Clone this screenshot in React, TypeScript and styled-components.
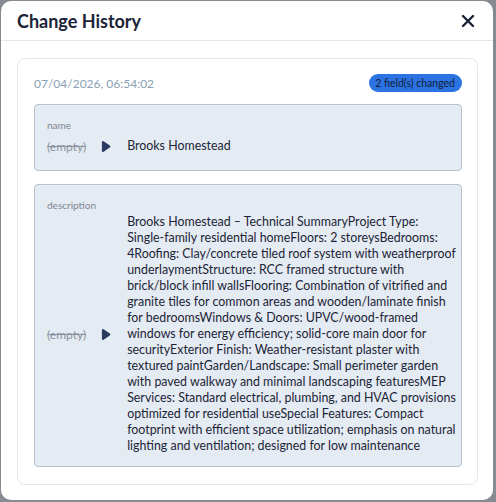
import React from "react";
import styled, { createGlobalStyle } from "styled-components";

const GlobalStyle = createGlobalStyle`
  html, body {
    margin: 0;
    padding: 0;
    background: #868a91;
    font-family: Lato, "Open Sans", sans-serif;
  }
`;

type Change = { field: string; from?: string; to: string };

const entry = {
  timestamp: "07/04/2026, 06:54:02",
  changes: [
    { field: "name", to: "Brooks Homestead" },
    {
      field: "description",
      to:
        "Brooks Homestead – Technical SummaryProject Type: Single-family residential homeFloors: 2 storeysBedrooms: 4Roofing: Clay/concrete tiled roof system with weatherproof underlaymentStructure: RCC framed structure with brick/block infill wallsFlooring: Combination of vitrified and granite tiles for common areas and wooden/laminate finish for bedroomsWindows & Doors: UPVC/wood-framed windows for energy efficiency; solid-core main door for securityExterior Finish: Weather-resistant plaster with textured paintGarden/Landscape: Small perimeter garden with paved walkway and minimal landscaping featuresMEP Services: Standard electrical, plumbing, and HVAC provisions optimized for residential useSpecial Features: Compact footprint with efficient space utilization; emphasis on natural lighting and ventilation; designed for low maintenance",
    },
  ] as Change[],
};

// keep hyphenated words on one line
const renderValue = (text: string) =>
  text.split(/(\S+-\S+)/).map((part, i) =>
    i % 2 === 1 ? <NoWrap key={i}>{part}</NoWrap> : part
  );

const ChangeHistory = () => {
  return (
    <Page>
      <GlobalStyle />
      <Modal>
        {/* Header */}
        <Header>
          <Title>Change History</Title>
          <CloseButton aria-label="Close">
            <svg width="14" height="14" viewBox="0 0 14 14">
              <path d="M2 2L12 12M12 2L2 12" stroke="#1b2437" strokeWidth="2.4" strokeLinecap="round" />
            </svg>
          </CloseButton>
        </Header>

        <Body>
          <Card>
            <CardTop>
              <Timestamp>{entry.timestamp}</Timestamp>
              <Badge>{entry.changes.length} field(s) changed</Badge>
            </CardTop>

            {entry.changes.map(change => (
              <FieldBox key={change.field}>
                <FieldLabel>{change.field}</FieldLabel>
                <DiffRow>
                  <OldValue>{change.from ?? "(empty)"}</OldValue>
                  <Arrow width="10" height="13" viewBox="0 0 10 13">
                    <path
                      d="M2 2.2 L8.2 6.5 L2 10.8 Z"
                      fill="#2b3a5f"
                      stroke="#2b3a5f"
                      strokeWidth="2.2"
                      strokeLinejoin="round"
                    />
                  </Arrow>
                  <NewValue>{renderValue(change.to)}</NewValue>
                </DiffRow>
              </FieldBox>
            ))}
          </Card>
        </Body>
      </Modal>
    </Page>
  );
};

export default ChangeHistory;

const Page = styled.div`
  padding: 1px 3px 2px 1px;
  height: 502px;
  box-sizing: border-box;
`;

const Modal = styled.div`
  background: #fff;
  border-radius: 10px;
  height: 100%;
  display: flex;
  flex-direction: column;
  overflow: hidden;
`;

const Header = styled.div`
  flex-shrink: 0;
  height: 39px;
  display: flex;
  align-items: center;
  justify-content: space-between;
  padding: 0 18px 0 16px;
  border-bottom: 1px solid #e3e6ea;
`;

const Title = styled.h2`
  margin: 0;
  font-size: 18px;
  font-weight: 700;
  color: #1b2437;
`;

const CloseButton = styled.button`
  border: 0;
  background: none;
  padding: 0;
  display: flex;
  cursor: pointer;
`;

const Body = styled.div`
  padding: 17px 15px 0 16px;
`;

const Card = styled.div`
  border: 1px solid #e3e8ee;
  border-radius: 8px;
  padding: 15px 15px 17px 16px;
  display: flex;
  flex-direction: column;
  gap: 12px;
`;

const CardTop = styled.div`
  display: flex;
  align-items: center;
  justify-content: space-between;
  height: 18px;
`;

const Timestamp = styled.span`
  font-size: 12px;
  color: #8ba0b4;
`;

const Badge = styled.span`
  background: #2b72e2;
  color: #14213a;
  font-size: 10.5px;
  line-height: 18px;
  padding: 0 7px 0 6px;
  border-radius: 9px;
`;

const FieldBox = styled.div`
  background: #e5ebf2;
  border: 1px solid #b7c3d1;
  border-radius: 4px;
  padding: 14px 1px 12px 12px;

  & + & {
    margin-top: 1px;
  }
`;

const FieldLabel = styled.div`
  font-size: 10px;
  line-height: 12px;
  color: #7b8592;
  margin-bottom: 3px;
`;

const DiffRow = styled.div`
  display: flex;
  align-items: center;
  gap: 15px;
  min-height: 24px;
`;

const OldValue = styled.span`
  font-size: 12px;
  color: #8a939f;
  text-decoration: line-through;
  flex-shrink: 0;
`;

const Arrow = styled.svg`
  flex-shrink: 0;
  margin-right: 1px;
`;

const NewValue = styled.span`
  font-size: 12.4px;
  line-height: 16px;
  color: #1b2437;
  flex: 1;
`;

const NoWrap = styled.span`
  display: inline-block;
  white-space: nowrap;
`;
